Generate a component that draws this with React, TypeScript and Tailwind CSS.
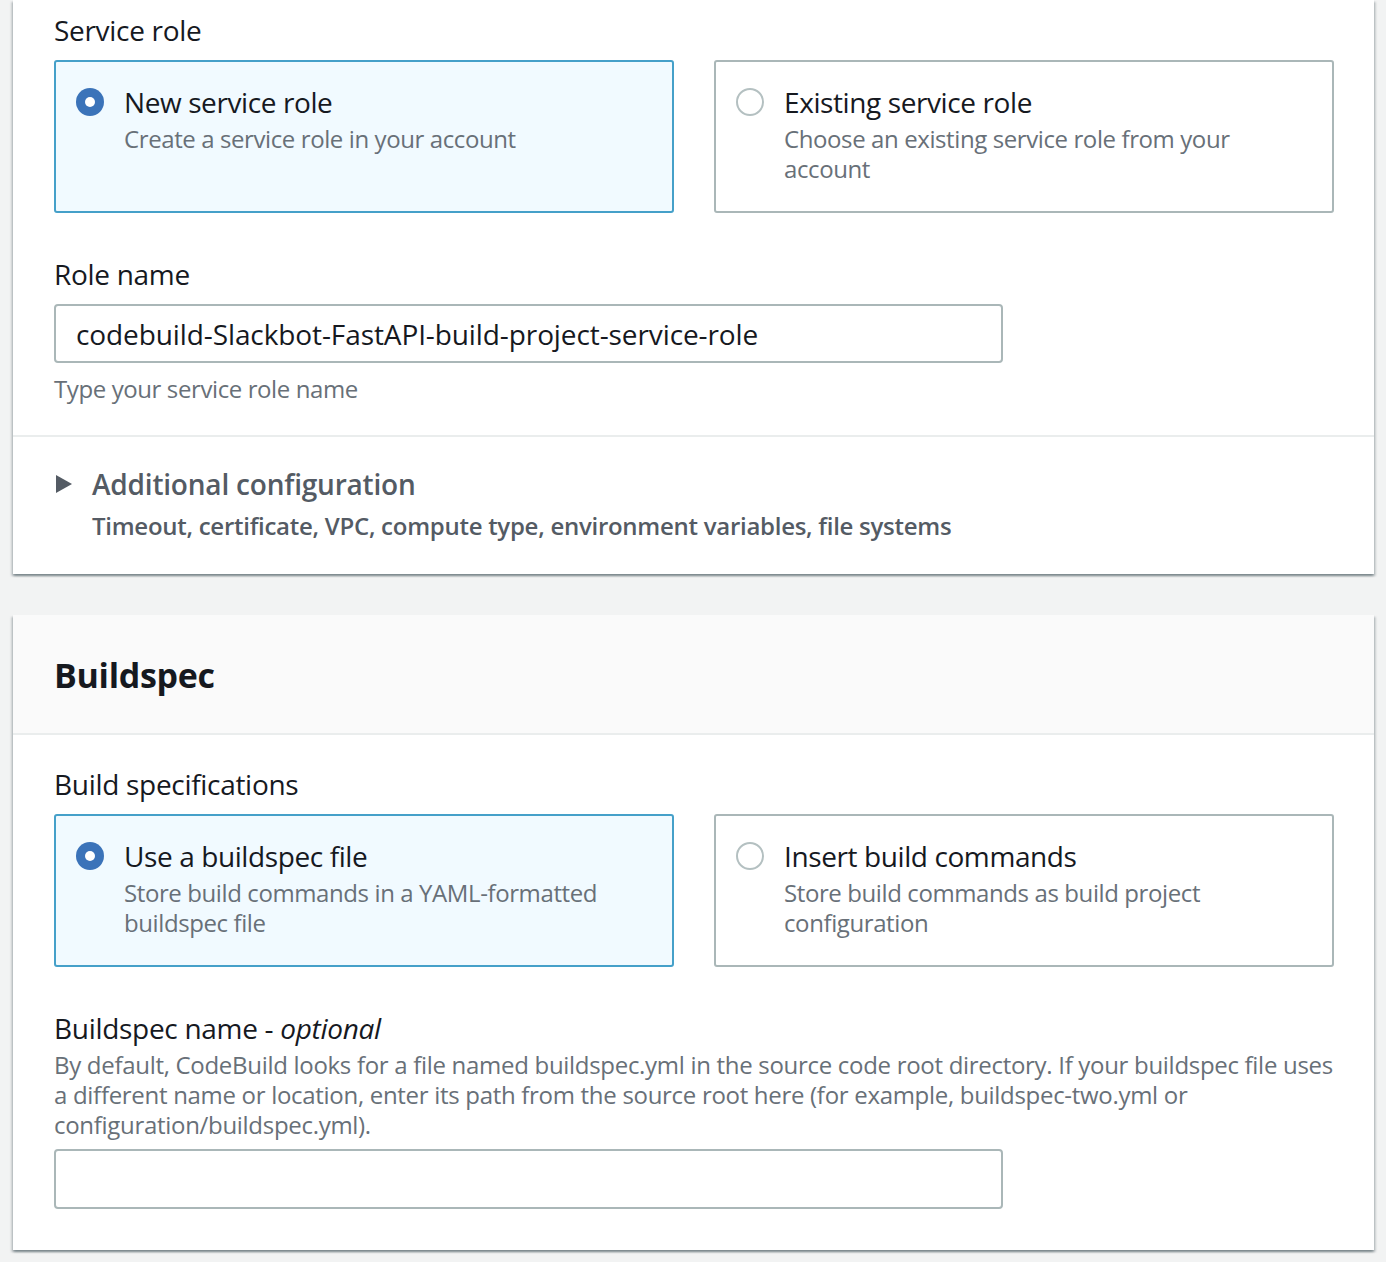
const font = { fontFamily: '"Open Sans", "Noto Sans", Arial, sans-serif' };

function Radio({ checked }: { checked: boolean }) {
  if (checked) {
    return (
      <span className="mt-[8px] flex h-[28px] w-[28px] shrink-0 items-center justify-center rounded-full bg-[#3b73b9]">
        <span className="h-[10px] w-[10px] rounded-full bg-white" />
      </span>
    );
  }
  return (
    <span className="mt-[8px] h-[28px] w-[28px] shrink-0 rounded-full border-2 border-[#b4c0c1] bg-white" />
  );
}

function Tile({
  title,
  desc,
  selected = false,
}: {
  title: string;
  desc: string;
  selected?: boolean;
}) {
  return (
    <div
      className={[
        "flex gap-5 rounded-[3px] border-2 px-5 pt-[18px] pb-[27px]",
        selected ? "border-[#45a0c9] bg-[#f1faff]" : "border-[#aab7b8] bg-white",
      ].join(" ")}
    >
      <Radio checked={selected} />
      <div>
        <div className="text-[28px] leading-[44px] tracking-[-0.4px] text-[#16191f]">{title}</div>
        <div className="text-[24px] leading-[30px] tracking-[-0.4px] text-[#687078]">{desc}</div>
      </div>
    </div>
  );
}

function Label({ children }: { children: React.ReactNode }) {
  return (
    <div className="text-[28px] leading-[44px] tracking-[-0.3px] text-[#16191f]">{children}</div>
  );
}

const panelShadow =
  "shadow-[0_2px_2px_0_rgba(0,28,36,0.3),2px_2px_2px_0_rgba(0,28,36,0.15),-2px_2px_2px_0_rgba(0,28,36,0.15)]";

export default function App() {
  return (
    <div className="min-h-[1262px] bg-[#f2f3f3] pl-[13px] pb-[14px]" style={font}>
      <div className="w-[1361px]">
        {/* Service role panel */}
        <section className={`bg-white ${panelShadow}`}>
          <div className="pl-[41px] pr-10 pt-[8px] pb-[31px]">
            <Label>Service role</Label>
            <div className="mt-2 grid grid-cols-2 gap-10">
              <Tile selected title="New service role" desc="Create a service role in your account" />
              <Tile
                title="Existing service role"
                desc="Choose an existing service role from your account"
              />
            </div>

            <div className="mt-[39px]">
              <Label>Role name</Label>
              <div className="mt-2 flex h-[59px] w-[949px] items-center rounded-[4px] border-2 border-[#aab7b8] px-5 text-[28px] tracking-[-0.1px] text-[#16191f]">
                codebuild-Slackbot-FastAPI-build-project-service-role
              </div>
              <div className="mt-[11px] text-[24px] leading-[30px] tracking-[-0.4px] text-[#687078]">
                Type your service role name
              </div>
            </div>
          </div>

          <div className="border-t-2 border-[#eaeded] pl-[41px] pr-10 pt-[25px] pb-[33px]">
            <div className="flex items-center gap-5">
              <svg width="18" height="20" viewBox="0 0 18 20" className="shrink-0">
                <path d="M2 1 L18 10 L2 19 Z" fill="#545b64" />
              </svg>
              <div className="text-[28px] font-semibold leading-[44px] tracking-[-0.2px] text-[#545b64]">
                Additional configuration
              </div>
            </div>
            <div className="mt-[5px] pl-[38px] text-[24px] font-semibold leading-[30px] tracking-[-0.27px] text-[#545b64]">
              Timeout, certificate, VPC, compute type, environment variables, file systems
            </div>
          </div>
        </section>

        {/* Buildspec panel */}
        <section className={`mt-[41px] bg-white ${panelShadow}`}>
          <div className="flex h-[120px] items-center border-b-2 border-[#eaeded] bg-[#fafafa] pl-[41px] pt-[2px]">
            <h2 className="text-[34px] font-bold leading-[44px] tracking-[-0.3px] text-[#16191f]">
              Buildspec
            </h2>
          </div>

          <div className="pl-[41px] pr-10 pt-[27px] pb-[41px]">
            <Label>Build specifications</Label>
            <div className="mt-2 grid grid-cols-2 gap-10">
              <Tile
                selected
                title="Use a buildspec file"
                desc="Store build commands in a YAML-formatted buildspec file"
              />
              <Tile
                title="Insert build commands"
                desc="Store build commands as build project configuration"
              />
            </div>

            <div className="mt-[39px]">
              <Label>
                Buildspec name - <i>optional</i>
              </Label>
              <div className="whitespace-nowrap text-[24px] leading-[30px] tracking-[-0.3px] text-[#687078]">
                By default, CodeBuild looks for a file named buildspec.yml in the source code root
                directory. If your buildspec file uses
                <br />
                a different name or location, enter its path from the source root here (for example,
                buildspec-two.yml or
                <br />
                configuration/buildspec.yml).
              </div>
              <div className="mt-[9px] h-[60px] w-[949px] rounded-[4px] border-2 border-[#aab7b8]" />
            </div>
          </div>
        </section>
      </div>
    </div>
  );
}
